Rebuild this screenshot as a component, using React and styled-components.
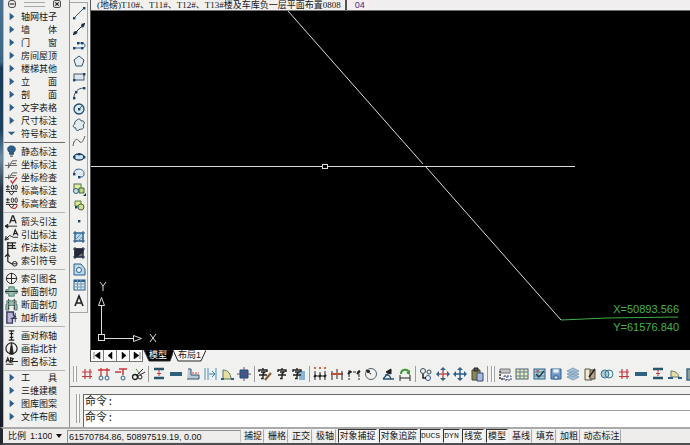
import React from "react";
import styled, { createGlobalStyle } from "styled-components";

const Global = createGlobalStyle`
  * { box-sizing: border-box; }
  html, body { margin: 0; background: #f0f0f0; }
  body { font: 9px/12px "Liberation Sans", "Noto Sans CJK SC", sans-serif; color: #141414; overflow: hidden; }
  button, input, select { font: inherit; color: inherit; }
`;

const Shell = styled.div`
  display: flex;
  flex-direction: column;
  height: 100vh;
  min-height: 440px;
  background: #f1f1f0;
`;
const Body = styled.div`
  flex: 1;
  display: flex;
  min-height: 0;
`;
const DesktopEdge = styled.div`
  flex: 0 0 3px;
  background: linear-gradient(#4a7393 0, #3c6585 62px, #163955 68px, #1c425f 130px, #6d8ca2 158px, #263342 190px, #2b3440 330px, #171d26 100%);
`;
const Palette = styled.nav`
  flex: 0 0 67px;
  border-left: 1px solid #a9bac7;
  border-right: 1px solid #8f8f8f;
  background: #f0f0ee;
`;
const PaletteHead = styled.div`
  display: flex;
  align-items: center;
  gap: 8px;
  height: 8px;
  padding: 0 8px 0 4px;
`;
const HeadButton = styled.button`
  display: flex;
  width: 8px;
  height: 8px;
  padding: 0;
  border: 0;
  background: none;
`;
const HeadGrip = styled.div`
  flex: 1;
  height: 5px;
  border: solid #a8a8a8;
  border-width: 1px 0;
`;
const PaletteGroup = styled.div`
  padding: 2px 0;
  margin-right: 4px;
  border-bottom: 1px solid ${(p) => (p.$dark ? "#6c6c6c" : "#b4b4b4")};
  &:last-child { border: 0; padding-top: 0; }
`;
const PaletteItem = styled.button`
  display: flex;
  align-items: center;
  gap: 3px;
  width: 100%;
  height: 13px;
  padding: 0 0 0 1px;
  border: 0;
  background: none;
  white-space: pre;
  text-align: left;
  svg { overflow: visible; }
`;
const Work = styled.main`
  flex: 1;
  min-width: 0;
  display: flex;
  flex-direction: column;
`;
const DrawRow = styled.div`
  flex: 1;
  min-height: 0;
  display: flex;
`;
const ToolColumn = styled.div`
  flex: 0 0 18px;
  align-self: flex-start;
  display: flex;
  flex-direction: column;
  align-items: center;
  gap: 2px;
  margin-top: 2px;
  padding: 3px 0 4px;
  border: solid #a5a5a5;
  border-width: 1px 1px 1px 0;
`;
const ToolButton = styled.button`
  flex: 0 0 14px;
  width: 14px;
  height: 14px;
  padding: 0;
  border: 0;
  background: none;
  svg { display: block; overflow: visible; }
`;
const DocumentArea = styled.section`
  flex: 1;
  min-width: 0;
  display: flex;
  flex-direction: column;
  margin-left: 2px;
  border-left: 1px solid #555;
`;
const DocTabs = styled.div`
  display: flex;
  background: #f0eeee;
  border-bottom: 1px solid #6f6f6f;
`;
const DocTab = styled.button`
  flex: none;
  height: 10px;
  padding: 0 4px 0 6px;
  border: 0;
  border-right: 2px solid #555;
  background: #f3f0f0;
  font: 9px/10px "Liberation Serif", "Noto Sans CJK SC", serif;
  white-space: nowrap;
`;
const DocCode = styled(DocTab)`
  margin-left: 2px;
  border: 0;
  background: #f8edef;
  color: #34308e;
  font-family: "Liberation Sans", sans-serif;
`;
const Canvas = styled.svg`
  flex: 1;
  display: block;
  width: 100%;
  min-height: 0;
  background: #000;
`;
const LayoutTabs = styled.div`
  display: flex;
  height: 12px;
  background: #f2f2f2;
`;
const NavButton = styled.button`
  width: 13px;
  height: 12px;
  padding: 0;
  border: solid #777;
  border-width: 0 1px 1px 0;
  background: #fbfbfb;
  svg { display: block; margin: auto; }
`;
const LayoutTab = styled.button`
  display: grid;
  width: ${(p) => p.$w}px;
  height: 12px;
  padding: 0;
  border: 0;
  background: none;
  color: ${(p) => (p.$on ? "#fff" : "#141414")};
  > * { grid-area: 1 / 1; }
  span { line-height: 10px; text-align: center; }
`;
const ToolRow = styled.div`
  display: flex;
  align-items: center;
  gap: 3px;
  height: 25px;
  padding-left: 3px;
  overflow: hidden;
  border-bottom: 1px solid #747474;
`;
const Grip = styled.div`
  flex: none;
  width: 4px;
  height: ${(p) => p.$h}px;
  border: solid #a2a2a2;
  border-width: 0 1px;
  background: #fafafa;
`;
const Divider = styled.div`
  flex: 0 0 1px;
  height: 16px;
  background: #9c9c9c;
`;
const CommandArea = styled.div`
  display: flex;
  gap: 3px;
  height: 40px;
  padding: 7px 0 0 6px;
`;
const CommandBox = styled.div`
  flex: 1;
  border: solid #666;
  border-width: 1px 0 0 1px;
  background: #fff;
`;
const CommandLine = styled.label`
  display: flex;
  height: 16px;
  padding-left: 1px;
  font: 11px/14px "Liberation Mono", "Noto Sans CJK SC", monospace;
  border-bottom: ${(p) => (p.$rule ? "1px solid #a0a0a0" : "0")};
  color: #222;
`;
const CommandInput = styled.input`
  flex: 1;
  min-width: 0;
  padding: 0;
  border: 0;
  outline: 0;
  background: none;
`;
const StatusBar = styled.footer`
  display: flex;
  align-items: center;
  height: 18px;
  padding-left: 5px;
  border: solid;
  border-color: #aaa #555 #4c5055 #202830;
  border-width: 2px 0 2px 3px;
  background: #efedec;
`;
const Scale = styled.label`
  display: flex;
  align-items: center;
  gap: 4px;
  width: 59px;
`;
const ScaleSelect = styled.select`
  width: 22px;
  padding: 0;
  border: 0;
  background: none;
  appearance: none;
`;
const Coordinates = styled.output`
  width: 174px;
  height: 13px;
  padding-left: 1px;
  border: solid #8f8f8f;
  border-width: 1px;
  border-right-color: #c4c4c4;
  border-bottom-color: #ddd;
`;
const Modes = styled.div`
  display: flex;
  gap: 2px;
  margin-left: 1px;
`;
const modeWidth = { two: 22, four: 39, ducs: 21, dyn: 17 };
const ModeButton = styled.button`
  display: flex;
  justify-content: center;
  width: ${(p) => modeWidth[p.$size]}px;
  height: 14px;
  padding: 0;
  border: 1px solid;
  border-color: ${(p) => (p.$on ? "#333 #f8f8f8 #f8f8f8 #333" : "#f8f8f8 #aaa #efedec #f8f8f8")};
  background: ${(p) => (p.$on ? "#f7f6f6" : "#efedec")};
  white-space: nowrap;
`;
const Latin = styled.span`
  font: 8px/12px "Liberation Mono", monospace;
`;

const K = "#222";
const B = "#2c5f8c";
const R = "#c8383a";

const Svg = ({ children, s = 14, stroke = K, w = 1 }) => (
  <svg width={s} height={s} viewBox="0 0 14 14" fill="none" stroke={stroke} strokeWidth={w} aria-hidden="true">{children}</svg>
);
const dot = (x, y, c = "#16456e") => <rect x={x - 1} y={y - 1} width="2.4" height="2.4" fill={c} stroke="none" />;

const arrow = <path d="M5 3v8l5-4z" fill={B} stroke="none" />;
const arrowDown = <path d="M3 5h8l-4 4z" fill={B} stroke="none" />;
const level = (c) => <><path d="M1 3h4M3 1v4M1 6h4" /><ellipse cx="8" cy="3.500" rx="1.300" ry="2.500" /><ellipse cx="12" cy="3.500" rx="1.300" ry="2.500" /><path d="M1 8h12M4 8l3 4 3-4" /><path d="M8 12c3 1 5-1 5-4" stroke={c} strokeWidth="1.300" /></>;
const paletteIcons = {
  bulb: <><path d="M7 1c-5 0-5 5-2 7v2h4V8c3-2 3-7-2-7z" fill={B} stroke="#1e4664" /><path d="M5.500 12h3" /></>,
  coord: <><path d="M0 8h13M3 11l5-8h5M7 6h5M4 5v6" stroke="#555" /></>,
  coordCheck: <><path d="M0 7h10M4 8l4-6h5M4 4v5M7 5h5" stroke="#555" /><path d="M6 10l2 3 5-6" stroke={R} strokeWidth="1.500" /></>,
  level: level("none"),
  levelCheck: level(R),
  arrowText: <><path d="M0 12h13M0 12l3-2v4z" fill={K} /><path d="M5 9l3-8h1l3 8M6 6h5" strokeWidth="1.400" /></>,
  leader: <><path d="M0 13l5-5 4 2h5M0 13l1-4 3 3z" fill="none" /><path d="M9 8l2-6 3 6M10 6h3" strokeWidth="1.300" /></>,
  method: <path d="M3 1v13M3 2h9M3 5h8M3 8h9M8 2v6" strokeWidth="1.400" />,
  index: <><path d="M3 0v8l5 3M0 3l3-3 2 3" strokeWidth="1.300" /><circle cx="10.500" cy="10.500" r="2.500" /><path d="M8 10.500h5" /></>,
  target: <><circle cx="7" cy="7" r="5.500" /><path d="M1 7h12M7 1v12" /></>,
  section: <><path d="M1 5h3V2h6v3h3v4h-3v3H4V9H1z" fill="#95bdb1" stroke="#527c72" /><path d="M0 7h14" stroke={K} /></>,
  broken: <><path d="M2 3h10v4h1v6h-3V8H4v5H1V7h1z" fill="#95bdb1" stroke="#527c72" /><path d="M4 1v12M10 1v12" stroke={K} strokeDasharray="2 1" /></>,
  breakLine: <><path d="M2 1h7v3l2 2-3 2v5H2z" fill="#b7b5d7" stroke="#38365c" strokeWidth="1.500" /><path d="M11 2v10M6 8h7" stroke="#38365c" /></>,
  axis: <path d="M7 2v10M4 2h6M4 12h6M5 5h4M5 9h4" strokeWidth="1.300" />,
  north: <><circle cx="7" cy="7" r="6" strokeWidth="1.300" /><path d="M7 1l2 12H5z" fill={K} /></>,
  caption: <><path d="M1 8l2-5 2 5M2 6h3M6 8V3l3 1-2 2 2 1-3 1M9 7h5M1 10h8" strokeWidth="1.200" /></>,
};

const groups = [
  { dark: true, items: ["轴网柱子", "墙　　体", "门　　窗", "房间屋顶", "楼梯其他", "立　　面", "剖　　面", "文字表格", "尺寸标注", "符号标注"] },
  { items: [["静态标注", "bulb"], ["坐标标注", "coord"], ["坐标检查", "coordCheck"], ["标高标注", "level"], ["标高检查", "levelCheck"]] },
  { items: [["箭头引注", "arrowText"], ["引出标注", "leader"], ["作法标注", "method"], ["索引符号", "index"]] },
  { items: [["索引图名", "target"], ["剖面剖切", "section"], ["断面剖切", "broken"], ["加折断线", "breakLine"]] },
  { items: [["画对称轴", "axis"], ["画指北针", "north"], ["图名标注", "caption"]] },
  { items: ["工　　具", "三维建模", "图库图案", "文件布图"] },
];

const cloud = "M4 3c2-3 5-2 5 0 4-1 4 3 2 4 2 3-1 5-3 4-2 3-5 1-4-1-4 0-3-4-1-4-1-1 0-3 1-3z";
const drawTools = [
  ["直线", <><path d="M2 12L12 2" stroke="#456" />{dot(2, 12)}{dot(12, 2)}</>],
  ["构造线", <><path d="M1 13L13 1" />{dot(4, 10)}{dot(10, 4)}<path d="M1 13l1-4 3 3zM13 1L9 2l3 3z" fill={K} stroke="none" /></>],
  ["多段线", <><path d="M2 10h8c4 0 4-5 0-5H6" stroke={B} />{dot(2, 10)}{dot(10, 10)}{dot(6, 5)}{dot(10, 5)}</>],
  ["正多边形", <path d="M7 2l5 4-2 6H4L2 6z" fill="#e4eef2" stroke="#3b5364" />],
  ["矩形", <><rect x="2" y="4" width="10" height="6" fill="#dce5ed" stroke="#4c5b68" />{dot(2, 10)}{dot(12, 4)}</>],
  ["圆弧", <><path d="M2 12C2 6 6 2 12 2" stroke="#456" />{dot(2, 12)}{dot(4, 6)}{dot(12, 2)}</>],
  ["圆", <><circle cx="7" cy="7" r="5" fill="#d9ebf2" stroke="#244b69" strokeWidth="1.300" /><path d="M7 7l3-3" stroke={B} />{dot(7, 7)}</>],
  ["修订云线", <path d={cloud} fill="#e2ecf0" stroke="#394f60" />],
  ["样条曲线", <path d="M1 12c1-7 4-8 6-5s4 1 6-5" stroke="#555" />],
  ["椭圆", <><ellipse cx="7" cy="7" rx="5" ry="3" fill="#cfe1ee" stroke="#1d4669" strokeWidth="1.300" />{dot(2, 7)}{dot(12, 7)}{dot(7, 4)}</>],
  ["椭圆弧", <><path d="M2 8c-1-7 11-6 10 0 0 3-2 3-5 3" fill="#dfeaf2" stroke={B} />{dot(7, 11)}{dot(2, 8)}</>],
  ["插入块", <><rect x="2" y="2" width="7" height="6" fill="#e3edaa" stroke="#507142" /><circle cx="4" cy="9" r="2.500" fill="#c7e2eb" stroke={B} /><path d="M7 6h5v5H7z" fill="#bed67d" stroke="#456538" /><path d="M14 11v3h-3z" fill={K} stroke="none" /></>],
  ["创建块", <><path d="M3 3h6v5H3z" fill="#dce992" stroke="#5c7c3a" /><circle cx="9" cy="9" r="3" fill="#cbdc8c" stroke="#49633c" />{dot(4, 9)}</>],
  ["点", dot(7, 7)],
  ["图案填充", <><rect x="3" y="3" width="8" height="8" fill="#bad7ea" stroke={B} /><path d="M1 3h12M1 11h12M3 1v12M11 1v12" stroke={B} /><path d="M3 6l3-3M3 10l7-7M6 11l5-5" stroke="#6b9abd" /></>],
  ["渐变色", <><rect x="3" y="3" width="8" height="8" fill="#77756d" stroke="#222b47" /><path d="M3 3h8v3L4 11H3z" fill="#252a38" /><path d="M1 3h12M1 11h12M3 1v12M11 1v12" stroke="#222b47" /></>],
  ["面域", <><path d="M2 2h7l4 5v6H2z" fill="#bed8e8" stroke={B} /><circle cx="7" cy="8" r="2.500" fill="#f3f6f8" stroke={B} /></>],
  ["表格", <><rect x="2" y="2" width="11" height="10" fill="#d9e8f2" stroke={B} /><path d="M2 3h11" stroke={B} strokeWidth="2" /><path d="M2 6h11M2 9h11M5.500 2v10M9 2v10" stroke="#7799b4" /></>],
  ["文字", <path d="M3 12L7 2l4 10M4.500 9h5" strokeWidth="1.600" />],
];

const bar = <path d="M1 5h12v4H1z" fill="#2f607f" stroke="none" />;
const hash = <path d="M5 2v10M10 2v10M2 5h10M2 9.500h10" stroke={R} strokeWidth="1.200" />;
const column = <><path d="M2 2h10M2 11h10" stroke="#26556b" strokeWidth="2.500" /><path d="M7 3v6M5 6.500h4" stroke={R} /></>;
const han = (x) => <path transform={`translate(${x} 0)`} d="M5 1v2M1 5V3h8v2M3 5h4L5 7v4.500H3M1 8h8" strokeWidth="1.400" />;
const cross = (c) => <><path d="M7 1v12M1 7h12" stroke={c} strokeWidth="1.500" /><path d="M7 0l3 3H4zM7 14l3-3H4zM0 7l3-3v6zM14 7l-3-3v6z" fill={B} stroke="none" /></>;
const dims = (c) => <><path d="M2 4v9M7 5v8M12 4v9M2 9h10" /><path d="M1 10l2-2M6 10l2-2M11 10l2-2" strokeWidth="2" /><path d="M1 1h2M6 1h2M11 1h2" stroke={c} strokeWidth="2" /></>;

const modifyTools = [
  [
    ["绘制轴网", hash],
    ["轴网标注", <><path d="M1 3h12M4 1v8M10 1v8" stroke={R} strokeWidth="1.300" /><circle cx="4" cy="11" r="2" stroke={B} /><circle cx="10" cy="11" r="2" stroke={B} /></>],
    ["添加轴线", <><path d="M1 5h6M5 2h8M9 2v6" stroke={R} strokeWidth="1.500" /><circle cx="9" cy="11" r="2" stroke={B} /></>],
    ["轴线裁剪", <><circle cx="4" cy="10" r="2.500" strokeWidth="1.300" /><circle cx="9" cy="10" r="2" /><path d="M5 9l7-7M9 8l5-3" /><path d="M5 2l4 5" stroke="#4f8b3d" /></>],
  ], [
    ["标准柱", column],
    ["绘制墙体", bar],
    ["墙体造型", <><path d="M2 2h3v6h8v4H1" fill="#b6cbd7" stroke="#3a5266" /><path d="M6 6h7" stroke={R} strokeDasharray="2 1" /></>],
    ["偏移", <><path d="M2 1v12M5 1v12M13 1v12" stroke="#4d91bd" /><path d="M6 7h6M9 4l3 3-3 3" stroke="#3882b2" /></>],
    ["门窗", <><path d="M3 12V3c5 0 8 4 8 9z" fill="#e3df9e" stroke="#58756c" /><path d="M1 12h3M11 12h3" stroke={B} strokeWidth="2" /></>],
    ["柱子", <><path d="M3 3h8v8H3z" fill="#315e91" stroke="#294a76" /><path d="M7 0v14M0 7h14" stroke="#644b76" /></>],
  ], [
    ["编辑文字", <>{han(0)}<path d="M7 13l6-7" stroke="#84542c" strokeWidth="2" /></>],
    ["单行文字", han(2)],
    ["多行文字", <><rect x="7" y="4" width="6" height="9" fill="#89b2d7" stroke="none" />{han(0)}</>],
  ], [
    ["门窗标注", dims("#cf6841")],
    ["逐点标注", <><path d="M2 4v9M7 2v10M12 4v9M1 7h12" /><path d="M2 7h9" stroke="#bd5439" strokeWidth="2" /></>],
    ["两点标注", <><path d="M2 3v10M12 3v10M2 5h10" strokeDasharray="3 1" /><path d="M1 7l3-3M10 7l3-3" strokeWidth="2" /></>],
    ["半径标注", <><circle cx="7" cy="7" r="5.500" stroke="#4f6370" /><path d="M7 7L3 4" /><path d="M2 3l4 1-2 2z" fill={K} /></>],
    ["角度标注", <><path d="M2 12h11M2 12l8-9M4 8c4-1 5 1 6 4" stroke="#285176" strokeWidth="1.300" /><path d="M5 5l5-3v5z" fill={K} /></>],
    ["更新标注", <><path d="M3 7c0-5 7-6 8-1" stroke="#3a9b35" strokeWidth="2" /><path d="M12 8L8 6l4-3z" fill="#3a9b35" stroke="none" /><path d="M2 11h10M2 8v6M12 8v6" /></>],
  ], [
    ["复制", <><circle cx="4" cy="4" r="2.500" stroke="#334b5e" /><circle cx="10" cy="5" r="2" stroke="#334b5e" /><circle cx="9" cy="11" r="2.500" stroke={B} /><path d="M4 7v4h3" strokeWidth="1.500" /></>],
    ["移动", cross("#bd5650")],
    ["自由移动", cross(B)],
    ["粘贴", <><path d="M2 3h8v10H2z" fill="#8b8952" stroke="#45472f" /><path d="M4 1h4v3H4z" fill="#555" /><path d="M7 6h6v8H7z" fill="#a9b9dd" stroke="#34487a" /></>],
  ],
];
const viewTools = [
  ["图层管理", <><path d="M2 2h10v4H2z" fill="#c4c4cc" stroke="#777" /><path d="M2 4v8h3" stroke="#666" strokeWidth="2" strokeDasharray="2 1" /><path d="M6 9h7v4H6zM9 9v4" stroke="#34427f" strokeDasharray="2 1" /></>],
  ["表格编辑", <><rect x="1" y="2" width="12" height="10" fill="#edebb8" stroke="#47627a" /><path d="M5 2v10M9 2v10M1 5h12M1 9h12" stroke="#5b7f98" /></>],
  ["图表", <><rect x="2" y="2" width="11" height="10" fill="#a9ced8" stroke={B} /><path d="M2 5h11M2 9h11M6 2v10" stroke="#60848f" /><path d="M4 7l3 3 5-6" stroke="#273e52" strokeWidth="1.500" /><path d="M4 4h3" stroke={R} /></>],
  ["保存", <><path d="M2 2h10v10H2z" fill="#6f99ca" stroke="#315c91" /><path d="M4 2h6v4H4z" fill="#eef4f8" stroke="#8fb0d0" /><path d="M5 9h4v3H5z" fill="#eee" stroke="#315c91" /></>],
  ["图层", <path d="M1 10l6-3 6 3-6 3zM1 7l6-3 6 3-6 3zM1 4l6-3 6 3-6 3z" fill="#a5c1d8" stroke="#83a3bd" />],
  ["图纸", <><path d="M2 2h5l2 3v8H2z" fill="#eee9ca" stroke="#565248" /><path d="M7 3h5v9H7z" fill="#b7a88c" stroke="#554b3f" /><path d="M6 10l6-8" strokeWidth="1.500" /></>],
  ["相交", <><circle cx="5" cy="7" r="4" fill="#a9ccdc" stroke="#397394" /><circle cx="9" cy="7" r="4" fill="none" stroke="#397394" /></>],
  ["网格", hash],
  ["墙体", bar],
  ["柱", column],
  ["门", <><path d="M3 10V4c4 0 7 2 8 6z" fill="#e3df9e" stroke="#69766c" /><path d="M0 11h5M10 11h4" stroke={B} strokeWidth="2" /></>],
  ["楼梯", <><path d="M2 13V2h11v4H7v7z" fill="#8a9f9c" stroke="#406d83" strokeWidth="1.500" /><path d="M5 3h8" stroke="#b15546" /></>],
];

const navs = [
  ["第一个", "M3 2v7M9 2v7L4 5.500z"],
  ["上一个", "M8 2v7L4 5.500z"],
  ["下一个", "M5 2v7l4-3.500z"],
  ["最后一个", "M10 2v7M4 2v7l5-3.500z"],
];
const modes = [
  ["捕捉", "two"], ["栅格", "two"], ["正交", "two"], ["极轴", "two"],
  ["对象捕捉", "four", true], ["对象追踪", "four", true], ["DUCS", "ducs", true], ["DYN", "dyn", true],
  ["线宽", "two", true], ["模型", "two", true],
  ["基线", "two"], ["填充", "two"], ["加粗", "two"], ["动态标注", "four"],
];

const Tool = ({ item }) => (
  <ToolButton type="button" aria-label={item[0]}><Svg>{item[1]}</Svg></ToolButton>
);

function SidePalette() {
  return (
    <Palette>
      <PaletteHead>
        <HeadButton type="button" aria-label="最小化"><Svg s={8} w={1.5}><rect x="1" y="1" width="12" height="12" rx="4" /><path d="M3 7h8" strokeWidth="2" /></Svg></HeadButton>
        <HeadGrip />
        <HeadButton type="button" aria-label="关闭"><Svg s={8} w={1.5}><rect x="1" y="1" width="12" height="12" rx="2" /><path d="M4 4l6 6M10 4l-6 6" strokeWidth="2" /></Svg></HeadButton>
      </PaletteHead>
      {groups.map((g, i) => (
        <PaletteGroup key={i} $dark={g.dark}>
          {g.items.map((it) => {
            const [label, icon] = Array.isArray(it) ? it : [it];
            return (
              <PaletteItem type="button" key={label}>
                <Svg s={13}>{icon ? paletteIcons[icon] : label === "符号标注" ? arrowDown : arrow}</Svg>
                {label}
              </PaletteItem>
            );
          })}
        </PaletteGroup>
      ))}
    </Palette>
  );
}

function Drawing() {
  return (
    <Canvas role="img" aria-label="模型空间">
      <g stroke="#dcdcdc" fill="none">
        <path d="M197 0L332 153M335 156L470 309" />
        <path d="M0 155.500h231M237 155.500h247" shapeRendering="crispEdges" />
        <rect x="231.500" y="153.500" width="5" height="4" />
        <rect x="7.500" y="323.500" width="6" height="6" />
        <path d="M10.500 323V294M14 327.500h28M7.500 294.500l3-8 3 8zM42.500 324.500l8 3-8 3z" />
        <path d="M9 271l3 4 3-4M12 275v5M59 323l6 8M65 323l-6 8" />
      </g>
      <path d="M470 309l46-2 71-1" fill="none" stroke="#3fae45" />
      <g fill="#45b34b" fontFamily="Liberation Sans, sans-serif" fontSize="11" textAnchor="end">
        <text x="588" y="302">X=50893.566</text>
        <text x="588" y="320">Y=61576.840</text>
      </g>
    </Canvas>
  );
}

export default function App() {
  return (
    <Shell>
      <Global />
      <Body>
        <DesktopEdge />
        <SidePalette />
        <Work>
          <DrawRow>
            <ToolColumn>{drawTools.map((t) => <Tool key={t[0]} item={t} />)}</ToolColumn>
            <DocumentArea>
              <DocTabs>
                <DocTab type="button">(地磅)T10#、T11#、T12#、T13#楼及车库负一层平面布置0808</DocTab>
                <DocCode type="button">04</DocCode>
              </DocTabs>
              <Drawing />
              <LayoutTabs>
                {navs.map(([name, d]) => (
                  <NavButton type="button" key={name} aria-label={name}>
                    <svg width="12" height="11" fill="#000" stroke="#000" strokeWidth="0.500"><path d={d} /></svg>
                  </NavButton>
                ))}
                <LayoutTab type="button" $on $w={30}>
                  <svg width="30" height="12"><path d="M1 0h30l-4 11H6z" fill="#000" stroke="#333" /></svg>
                  <span>模型</span>
                </LayoutTab>
                <LayoutTab type="button" $w={33}>
                  <svg width="33" height="12"><path d="M0 0l5 11h23l5-11" fill="#fafafa" stroke="#222" /></svg>
                  <span>布局1</span>
                </LayoutTab>
              </LayoutTabs>
            </DocumentArea>
          </DrawRow>
          <ToolRow>
            <Grip $h={16} />
            {modifyTools.map((group, i) => (
              <React.Fragment key={i}>
                {group.map((t) => <Tool key={t[0]} item={t} />)}
                <Divider />
              </React.Fragment>
            ))}
            <Grip $h={16} />
            {viewTools.map((t) => <Tool key={t[0]} item={t} />)}
          </ToolRow>
          <CommandArea>
            <Grip $h={29} />
            <CommandBox>
              <CommandLine as="div" $rule>命令:</CommandLine>
              <CommandLine>命令:<CommandInput aria-label="命令" /></CommandLine>
            </CommandBox>
          </CommandArea>
        </Work>
      </Body>
      <StatusBar>
        <Scale>
          比例
          <ScaleSelect defaultValue="1:100"><option>1:100</option></ScaleSelect>
          <svg width="6" height="4" aria-hidden="true"><path d="M0 0h6L3 4z" fill="#111" /></svg>
        </Scale>
        <Coordinates>61570784.86, 50897519.19, 0.00</Coordinates>
        <Modes>
          {modes.map(([label, size, on]) => (
            <ModeButton type="button" key={label} $size={size} $on={on} aria-pressed={!!on}>
              {/^[A-Z]/.test(label) ? <Latin>{label}</Latin> : label}
            </ModeButton>
          ))}
        </Modes>
      </StatusBar>
    </Shell>
  );
}
